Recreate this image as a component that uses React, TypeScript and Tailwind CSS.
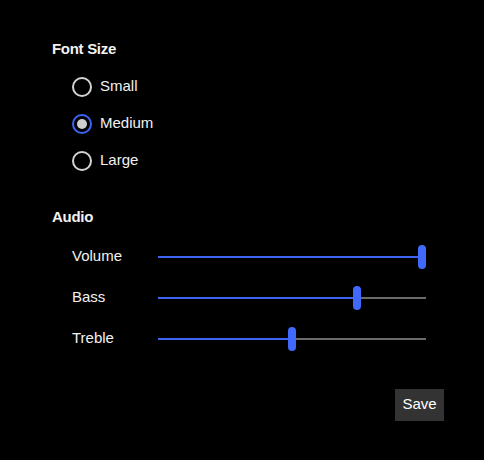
import React, { useState } from 'react';

const fontSizes = ['Small', 'Medium', 'Large'];

const sliders = [
  { name: 'Volume', value: 100 },
  { name: 'Bass', value: 75 },
  { name: 'Treble', value: 50 },
];

const Slider: React.FC<{ value: number }> = ({ value }) => {
  // track is 268px, thumb 8px wide
  const left = (260 * value) / 100;
  return (
    <div className="relative w-[268px] h-[24px] flex items-center">
      <div className="w-full h-[2px] bg-[#6b6b6b]">
        <div className="h-full bg-[#3d64f4]" style={{ width: left + 4 }} />
      </div>
      <div
        className="absolute top-0 w-[8px] h-[24px] rounded-full bg-[#4169fb]"
        style={{ left }}
      />
    </div>
  );
};

const App: React.FC = () => {
  const [size, setSize] = useState('Medium');

  return (
    <div
      className="w-[484px] h-[460px] bg-black text-[#f2f2f2] pt-[39px] pl-[52px] pr-[40px] flex flex-col"
      style={{ fontFamily: '"Liberation Sans", Arial, sans-serif' }}
    >
      {/* Font size */}
      <h2 className="text-[15px] font-bold tracking-[-0.3px] leading-[20px]">Font Size</h2>
      <div className="mt-[9px] ml-[20px] flex flex-col">
        {fontSizes.map((s) => {
          const on = s === size;
          return (
            <button
              key={s}
              onClick={() => setSize(s)}
              className="h-[37px] flex items-center gap-[8px] text-[15px]"
            >
              <span
                className={
                  'w-[20px] h-[20px] rounded-full border-2 flex items-center justify-center ' +
                  (on ? 'border-[#3d64f4]' : 'border-[#d4d4d4]')
                }
              >
                {on && <span className="w-[10px] h-[10px] rounded-full bg-[#cfcfcf]" />}
              </span>
              <span>{s}</span>
            </button>
          );
        })}
      </div>

      {/* Audio */}
      <h2 className="mt-[27.5px] text-[15px] font-bold tracking-[-0.3px] leading-[20px]">Audio</h2>
      <div className="mt-[9.5px] ml-[20px] flex flex-col">
        {sliders.map((sl) => (
          <div key={sl.name} className="h-[41px] flex items-center">
            <span className="w-[86px] text-[15px]">{sl.name}</span>
            <Slider value={sl.value} />
          </div>
        ))}
      </div>

      <div className="mt-[29.5px] flex justify-end">
        <button className="w-[49px] h-[32px] bg-[#333333] text-[15px] text-white">Save</button>
      </div>
    </div>
  );
};

export default App;
